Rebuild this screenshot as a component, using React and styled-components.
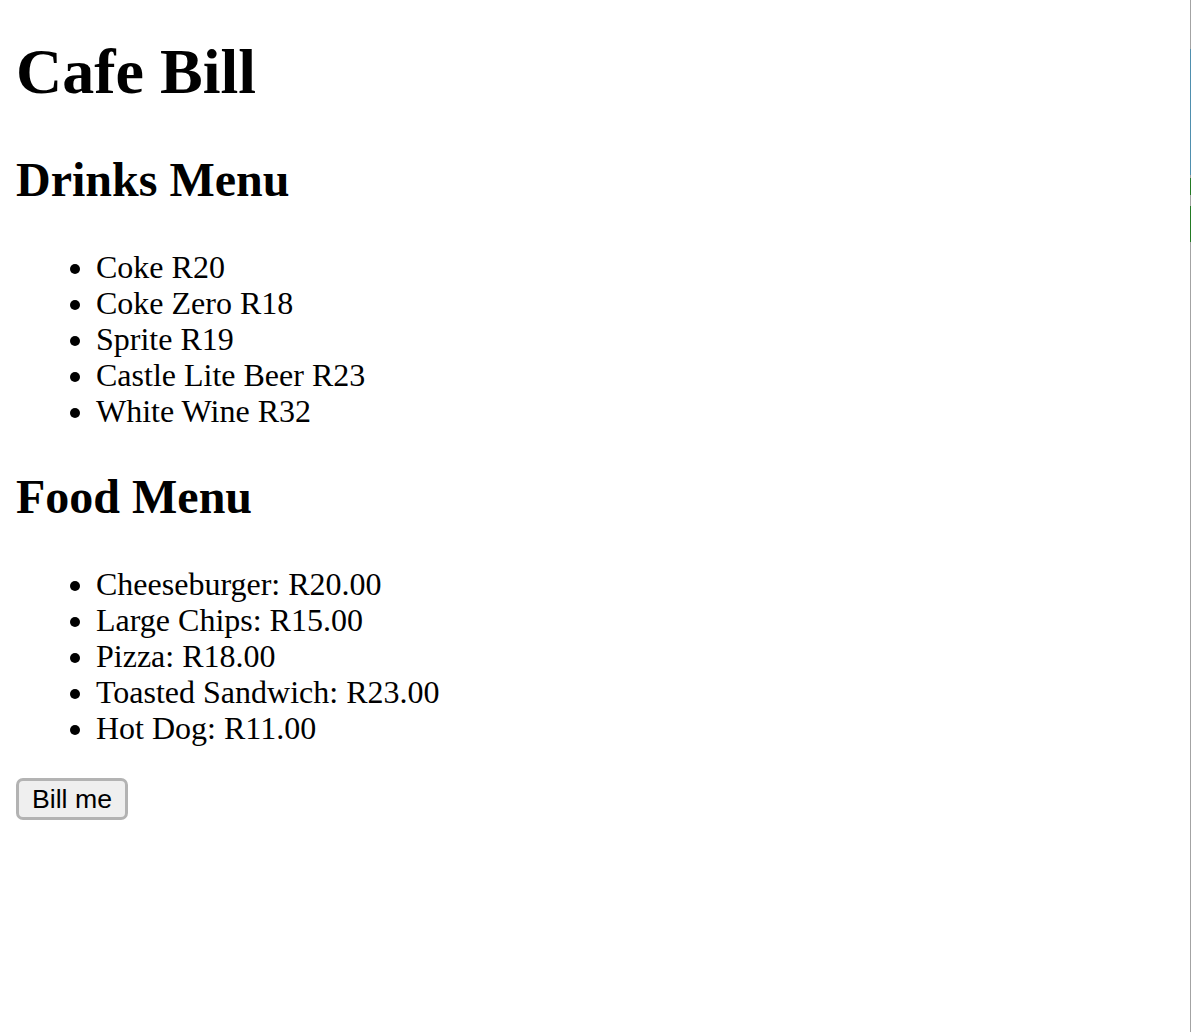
import React from "react"
import styled, { createGlobalStyle } from "styled-components"

const menus = [
  {
    title: "Drinks Menu",
    items: ["Coke R20", "Coke Zero R18", "Sprite R19", "Castle Lite Beer R23", "White Wine R32"],
  },
  {
    title: "Food Menu",
    items: [
      "Cheeseburger: R20.00",
      "Large Chips: R15.00",
      "Pizza: R18.00",
      "Toasted Sandwich: R23.00",
      "Hot Dog: R11.00",
    ],
  },
]

const edgeMarks = [
  { top: 49, height: 126, color: "#4f8fae" },
  { top: 178, height: 17, color: "#237a23" },
  { top: 206, height: 36, color: "#237a23" },
]

const App = () => {
  return (
    <Page>
      <GlobalStyle />
      <Title>Cafe Bill</Title>
      <Menus>
        {menus.map((menu) => (
          <MenuSection key={menu.title}>
            <MenuTitle>{menu.title}</MenuTitle>
            <MenuList>
              {menu.items.map((item, index) => (
                <MenuItem key={index}>{item}</MenuItem>
              ))}
            </MenuList>
          </MenuSection>
        ))}
      </Menus>
      <BillButton>Bill me</BillButton>
      <WindowEdge>
        {edgeMarks.map((mark, index) => (
          <EdgeMark key={index} top={mark.top} height={mark.height} color={mark.color} />
        ))}
      </WindowEdge>
    </Page>
  )
}

export default App

const GlobalStyle = createGlobalStyle`
  html, body {
    margin: 0;
    padding: 0;
    background: #fff;
  }
  body {
    font-family: "Liberation Serif", "Times New Roman", serif;
    color: #000;
  }
`

const Page = styled.div`
  display: flex;
  flex-direction: column;
  align-items: flex-start;
  gap: 32px;
  padding: 36px 16px;
  min-height: 1032px;
  box-sizing: border-box;
  overflow: hidden;
`

const Title = styled.h1`
  font-size: 64px;
  line-height: 72px;
  font-weight: bold;
  margin: 0 0 13px;
`

const Menus = styled.div`
  display: flex;
  flex-direction: column;
  gap: 41px;
`

const MenuSection = styled.section`
  display: flex;
  flex-direction: column;
  gap: 42px;
`

const MenuTitle = styled.h2`
  font-size: 48px;
  line-height: 54px;
  font-weight: bold;
  margin: 0;
`

const MenuList = styled.ul`
  list-style: disc;
  margin: 0;
  padding-left: 80px;
`

const MenuItem = styled.li`
  font-size: 32px;
  line-height: 36px;
`

const BillButton = styled.button`
  height: 42px;
  padding: 0 13px;
  box-sizing: border-box;
  font-family: "Liberation Sans", Arial, sans-serif;
  font-size: 26.67px;
  color: #000;
  background: #efefef;
  border: 3px solid #b3b3b3;
  border-radius: 7px;
`

const WindowEdge = styled.div`
  position: fixed;
  top: 0;
  right: 1px;
  width: 1px;
  height: 100%;
  background: #a3a3a3;
`

const EdgeMark = styled.div`
  position: absolute;
  left: 0;
  width: 1px;
  top: ${({ top }) => top}px;
  height: ${({ height }) => height}px;
  background: ${({ color }) => color};
`
